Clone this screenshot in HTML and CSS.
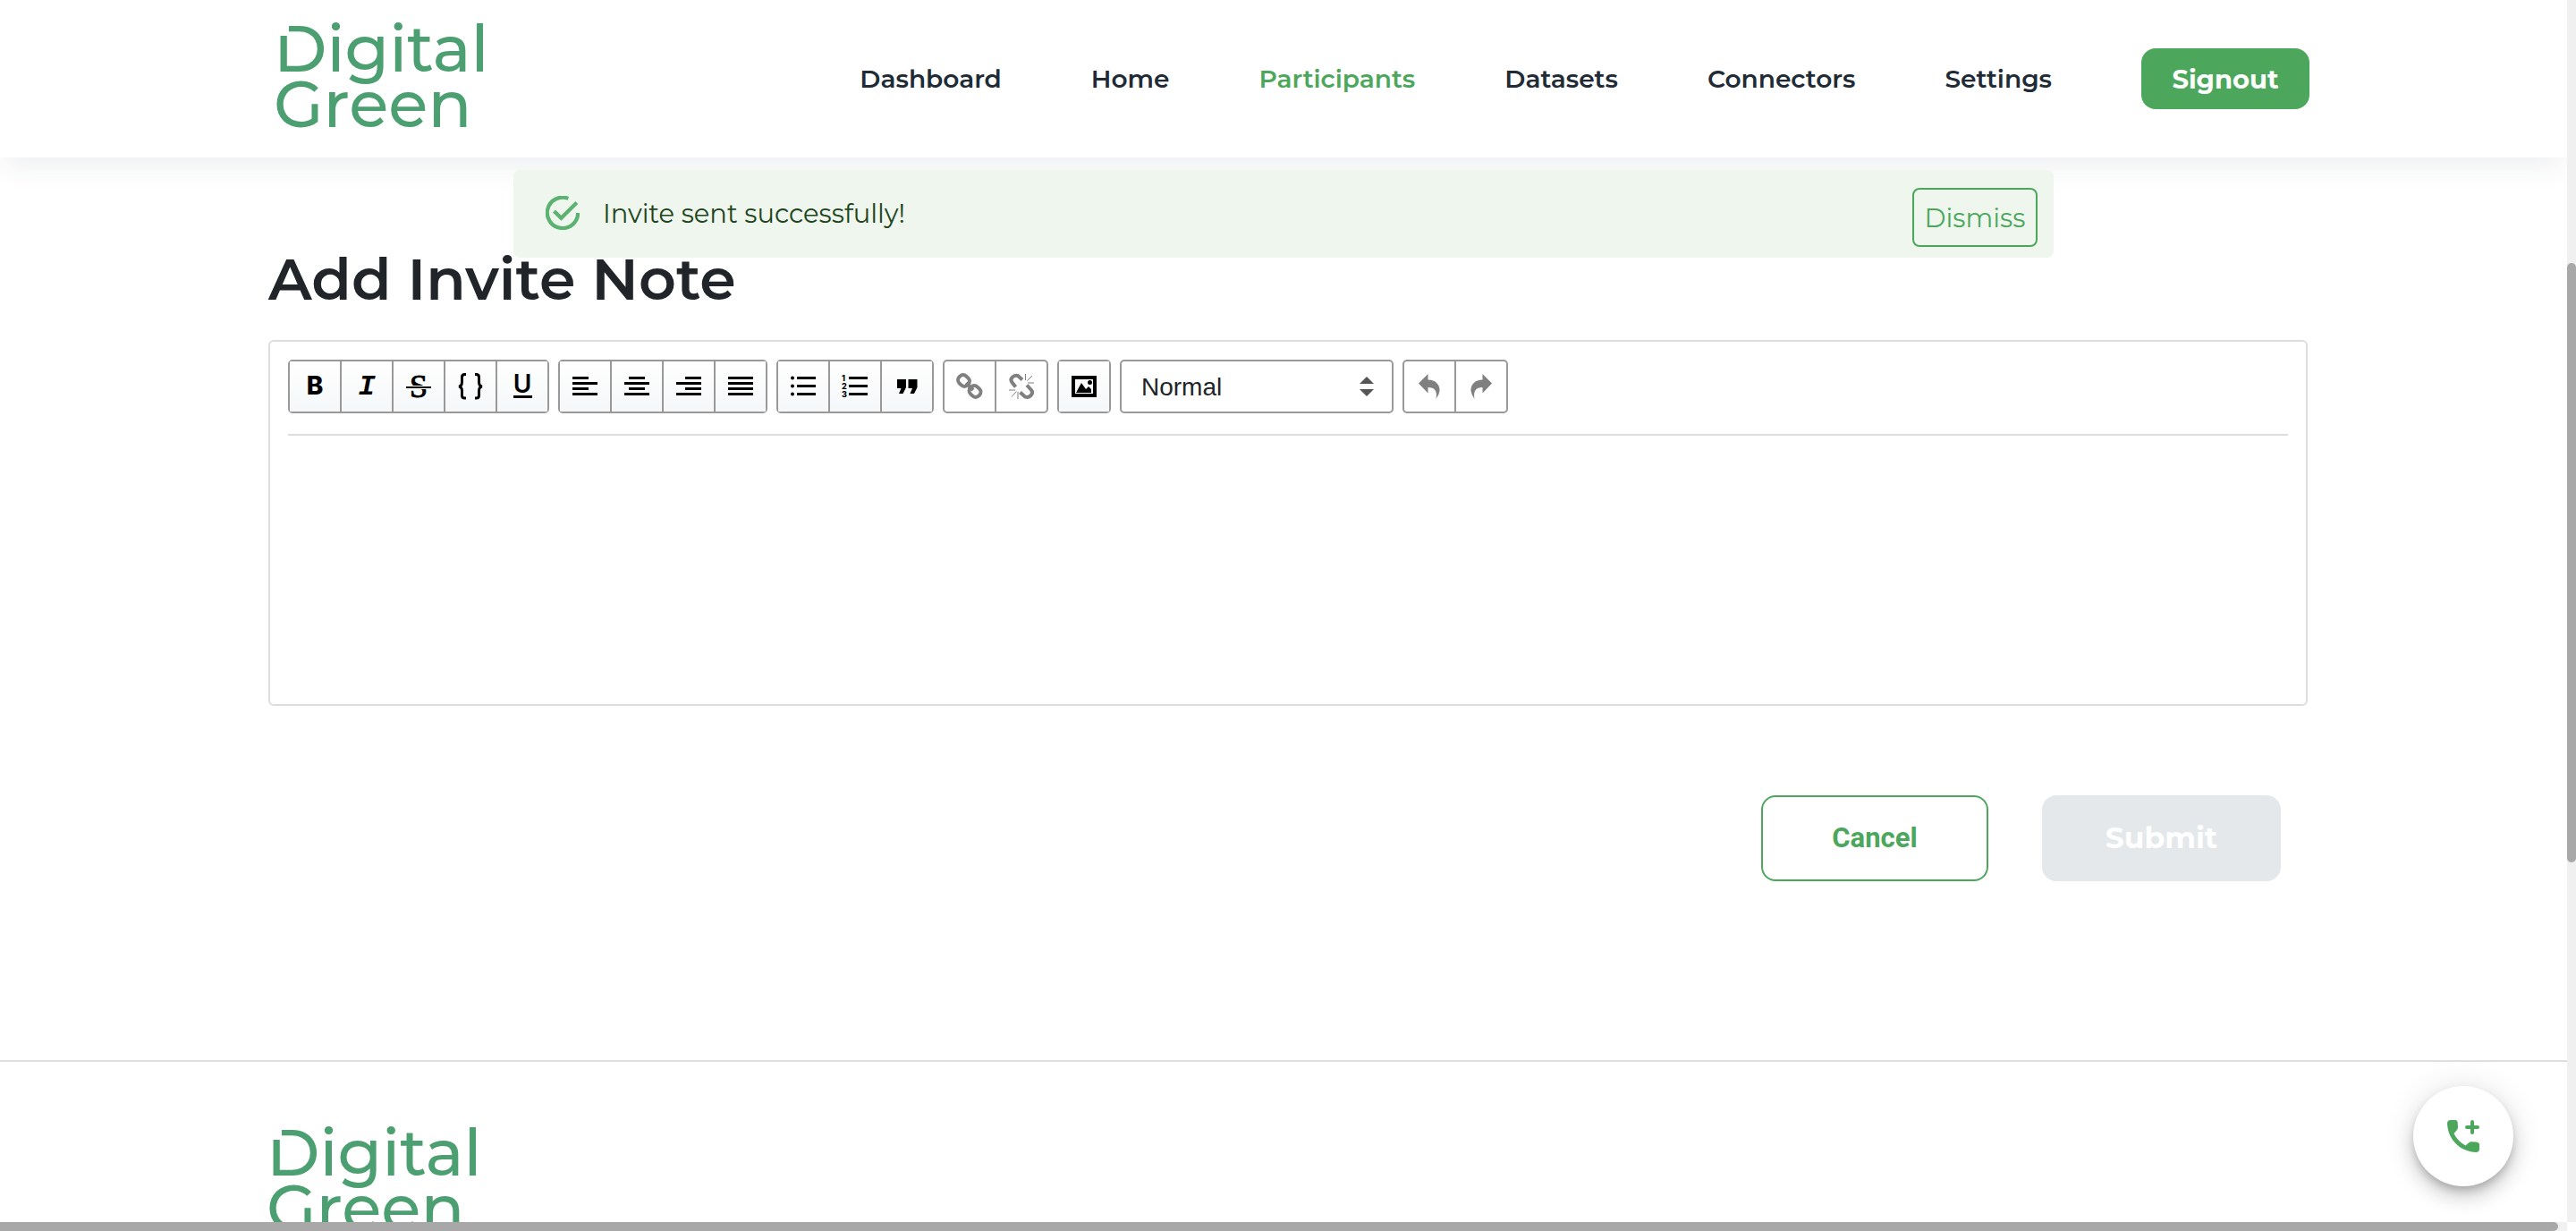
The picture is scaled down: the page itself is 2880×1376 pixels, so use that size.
FILE: index.html
```html
<!DOCTYPE html>
<html lang="en">
<head>
<meta charset="utf-8">
<meta name="viewport" content="width=device-width, initial-scale=1">
<title>Digital Green - Add Invite Note</title>
<link rel="stylesheet" href="styles.css">
</head>
<body>
<div class="window">
  <div class="page">
    <header class="header">
      <a href="#" class="logo-link" aria-label="Digital Green">
        <svg class="logo" viewBox="0 0 304 132" aria-hidden="true">
          <text x="0" y="49">Digital</text>
          <text x="0" y="111">Green</text>
          <rect class="logo-cut" x="5" y="-3" width="12" height="12"/>
        </svg>
      </a>
      <nav class="nav">
        <a href="#">Dashboard</a>
        <a href="#">Home</a>
        <a href="#" class="active">Participants</a>
        <a href="#">Datasets</a>
        <a href="#">Connectors</a>
        <a href="#">Settings</a>
        <button type="button" class="signout">Signout</button>
      </nav>
    </header>

    <div class="toast" role="status">
      <svg class="toast-icon" viewBox="0 0 36 36" fill="none" stroke="#5cb270" stroke-width="4" aria-hidden="true">
        <path d="M24 2.7A16.3 16.3 0 1 0 34.300 18"/>
        <path d="M9 16l7.500 7.500L33 7"/>
      </svg>
      <span class="toast-text">Invite sent successfully!</span>
      <button type="button" class="dismiss">Dismiss</button>
    </div>

    <main class="main">
      <h1>Add Invite Note</h1>
      <section class="editor">
        <div class="toolbar">
          <div class="group">
            <button type="button" aria-label="Bold"><svg viewBox="0 0 32 32"><text class="ic-b" x="16" y="25">B</text></svg></button>
            <button type="button" aria-label="Italic"><svg viewBox="0 0 32 32"><text class="ic-i" x="16" y="25">I</text></svg></button>
            <button type="button" aria-label="Strikethrough"><svg viewBox="0 0 32 32"><text class="ic-s" x="16" y="28">S</text><rect class="halo" x="2" y="15" width="28" height="4"/><rect x="2" y="16" width="28" height="2"/></svg></button>
            <button type="button" aria-label="Monospace"><svg viewBox="0 0 32 32" fill="none" stroke="#000" stroke-width="3"><path d="M11 2.500H9.500Q6.500 2.500 6.500 5.500V11Q6.500 15.500 3 16Q6.500 16.500 6.500 21V26Q6.500 29 9.500 29H11M21 2.500h1.500Q25.500 2.500 25.500 5.500V11Q25.500 15.500 29 16Q25.500 16.500 25.500 21V26Q25.500 29 22.500 29H21"/></svg></button>
            <button type="button" aria-label="Underline"><svg viewBox="0 0 32 32"><text class="ic-u" x="16" y="23">U</text><rect x="6" y="26" width="21" height="3"/></svg></button>
          </div>
          <div class="group">
            <button type="button" aria-label="Align left"><svg viewBox="0 0 32 32"><path d="M2 5h18v3H2zM2 11h28v3H2zM2 17h18v3H2zM2 23h28v3H2z"/></svg></button>
            <button type="button" aria-label="Align center"><svg viewBox="0 0 32 32"><path d="M7 5h18v3H7zM2 11h28v3H2zM7 17h18v3H7zM2 23h28v3H2z"/></svg></button>
            <button type="button" aria-label="Align right"><svg viewBox="0 0 32 32"><path d="M12 5h18v3H12zM2 11h28v3H2zM12 17h18v3H12zM2 23h28v3H2z"/></svg></button>
            <button type="button" aria-label="Justify"><svg viewBox="0 0 32 32"><path d="M2 5h28v3H2zM2 11h28v3H2zM2 17h28v3H2zM2 23h28v3H2z"/></svg></button>
          </div>
          <div class="group">
            <button type="button" aria-label="Bulleted list"><svg viewBox="0 0 32 32"><circle cx="4" cy="6.500" r="2"/><circle cx="4" cy="15.500" r="2"/><circle cx="4" cy="24.500" r="2"/><path d="M9 5h21v3H9zM9 14h21v3H9zM9 23h21v3H9z"/></svg></button>
            <button type="button" aria-label="Numbered list"><svg viewBox="0 0 32 32"><path d="M9 5h21v3H9zM9 14h21v3H9zM9 23h21v3H9z"/><g class="ic-n"><text x="1" y="10">1</text><text x="1" y="19">2</text><text x="1" y="28">3</text></g></svg></button>
            <button type="button" aria-label="Quote"><svg viewBox="0 0 32 32"><path d="M5 8h10v9l-3.500 7H7l2.500-6H5zM17.500 8h10v9L24 24h-4.500l2.500-6h-4.500z"/></svg></button>
          </div>
          <div class="group">
            <button type="button" aria-label="Link" disabled><svg viewBox="0 0 32 32" fill="none" stroke="#808080" stroke-width="4"><rect x="-5.500" y="-6.500" width="11" height="13" rx="5" transform="translate(9.500 9.500) rotate(-45)"/><rect x="-5.500" y="-6.500" width="11" height="13" rx="5" transform="translate(22 21.500) rotate(-45)"/><path d="M12 12l8 8"/></svg></button>
            <button type="button" aria-label="Unlink" disabled><svg viewBox="0 0 32 32" fill="none" stroke="#808080"><path stroke-width="4" d="M9.500 16.500l-4-5Q3 8 6 5.500T12 4l5 4.500M22 14.500l5 5.500Q29.500 23 26.500 26T20 27.500l-5.500-5"/><path stroke-width="1" d="M20.500 2v7M28 4l-5.500 5.500M30 12h-7M12 22v8M10.500 21.500L5 27.500M9 20H2"/></svg></button>
          </div>
          <div class="group">
            <button type="button" aria-label="Image"><svg viewBox="0 0 32 32"><path fill-rule="evenodd" d="M2 4h28v24H2zM6 8v16h20V8z"/><path d="M7 23l6-11 5 7 3-3 3 3v4z"/><circle cx="22.500" cy="11.500" r="2.500"/></svg></button>
          </div>
          <label class="block-type">
            <select aria-label="Block type"><option>Normal</option><option>Heading</option><option>Quote</option></select>
            <svg viewBox="0 0 16 22" aria-hidden="true"><path d="M0 8l8-8 8 8zM0 14h16l-8 8z"/></svg>
          </label>
          <div class="group">
            <button type="button" aria-label="Undo" disabled><svg viewBox="0 0 32 32"><path d="M4 12.500L14.500 2v6.500C23 8.500 28 14 27.500 21q-.5 4-4 9Q26 17 14.500 17v6.500z"/></svg></button>
            <button type="button" aria-label="Redo" disabled><svg viewBox="0 0 32 32"><path d="M28 12.500L17.500 2v6.500C9 8.500 4 14 4.500 21q.5 4 4 9Q6 17 17.500 17v6.500z"/></svg></button>
          </div>
        </div>
        <div class="editor-body" contenteditable="true" role="textbox" aria-multiline="true" aria-label="Invite note"></div>
      </section>
      <div class="actions">
        <button type="button" class="cancel">Cancel</button>
        <button type="submit" class="submit" disabled>Submit</button>
      </div>
    </main>

    <footer class="footer">
      <svg class="logo" viewBox="0 0 304 132" role="img" aria-label="Digital Green">
        <text x="0" y="49">Digital</text>
        <text x="0" y="111">Green</text>
        <rect class="logo-cut" x="5" y="-3" width="12" height="12"/>
      </svg>
    </footer>

    <button type="button" class="call" aria-label="Add call">
      <svg viewBox="0 0 36 36"><path d="M4 0h5q2.500 0 2.700 3l.3 5q0 2-1.500 3.500L7.500 15Q12 24 20.500 28.500l3.500-3Q25 24 27.500 24.200l5 .3Q36 25 36 27.500V32q0 4-4 4C14 35 1 22 0 4Q0 0 4 0z"/><path class="plus" d="M28 2v12M22 8h12"/></svg>
    </button>
  </div>
  <div class="scroll-y"><div class="thumb"></div></div>
  <div class="scroll-x"><div class="thumb"></div></div>
</div>
</body>
</html>
```
FILE: styles.css
```css
* { box-sizing: border-box; }

body {
  margin: 0;
  font-family: Montserrat, Inter, sans-serif;
  font-size: 28px;
  color: #212529;
  background: #fff;
}

button { font: inherit; cursor: pointer; padding: 0; }

/* Window frame: page area plus the two scrollbars */
.window {
  display: grid;
  grid-template: minmax(0, 1fr) 10px / minmax(0, 1fr) 10px;
  height: 100vh;
}
.page { position: relative; overflow: hidden; }
.scroll-x, .scroll-y { background: #f0f0f0; }
.thumb { background: #a8a8a8; border-radius: 5px; }
.scroll-y { padding-top: 294px; }
.scroll-y .thumb { height: 670px; }
.scroll-x .thumb { height: 10px; margin-right: 10px; border-radius: 0 5px 5px 0; }

/* Header */
.header {
  position: relative;
  z-index: 1;
  display: flex;
  align-items: center;
  justify-content: space-between;
  height: 176px;
  padding: 0 288px 0 306px;
  background: #fff;
  box-shadow: 0 16px 30px -6px rgba(38, 57, 77, 0.08);
}
.logo-link { display: block; height: 132px; margin-top: 18px; }
.logo { display: block; width: 304px; height: 132px; overflow: visible; fill: #4c9f70; font-size: 72px; font-weight: 500; }
.logo-cut { fill: #fff; }
.nav { display: flex; align-items: center; gap: 100px; font-weight: 600; }
.nav a { color: #212b36; text-decoration: none; }
.nav .active { color: #4ca75d; }
.signout {
  width: 188px;
  height: 68px;
  border: 0;
  border-radius: 16px;
  background: #4ca75d;
  color: #fff;
  font-size: 29px;
  font-weight: 700;
}

/* Success message */
.toast {
  position: absolute;
  z-index: 2;
  top: 190px;
  left: 20%;
  width: 60%;
  height: 98px;
  display: flex;
  align-items: center;
  padding: 0 18px 2px 36px;
  border-radius: 8px;
  background: #eff6ee;
  font-size: 29px;
}
.toast-icon { width: 38px; height: 38px; }
.toast-text { flex: 1; margin-left: 26px; color: #1e4620; }
.dismiss {
  width: 140px;
  height: 66px;
  margin-top: 10px;
  border: 2px solid #4ca75d;
  border-radius: 8px;
  background: none;
  color: #4ca75d;
}

/* Invite note form */
.main { padding: 97px 290px 200px 300px; }
h1 { margin: 0 0 29px; font-size: 65px; line-height: 78px; font-weight: 600; }
.editor { min-height: 409px; padding: 20px; border: 2px solid #ddd; border-radius: 6px; }
.toolbar { display: flex; gap: 10px; padding-bottom: 23px; border-bottom: 2px solid #ddd; }
.group { display: flex; border: 2px solid #999; border-radius: 5px; }
.group button {
  display: grid;
  place-items: center;
  width: 56px;
  height: 56px;
  border: 0;
  background: linear-gradient(#fff, #f5f7f8);
}
.group button + button { width: 58px; border-left: 2px solid #999; }
.group button:disabled { background: none; cursor: default; }
.group svg { width: 32px; height: 32px; overflow: visible; }
.group button:disabled svg:not([fill]) { fill: #808080; }
.group text { text-anchor: middle; }
.ic-b { font: 800 28px Inter, sans-serif; }
.ic-i { font: italic 700 32px "Liberation Mono", monospace; }
.ic-s { font: 36px "Liberation Serif", serif; stroke: #000; stroke-width: 1px; }
.ic-u { font: 600 28px Inter, sans-serif; }
.group .ic-n text { font: 800 9px Inter, sans-serif; text-anchor: start; }
.halo { fill: #fafbfb; }
.block-type { position: relative; width: 306px; }
.block-type select {
  appearance: none;
  width: 100%;
  height: 60px;
  padding: 0 50px 0 22px;
  border: 2px solid #999;
  border-radius: 5px;
  background: #fff;
  color: #212529;
  font: 28px "Liberation Sans", Arial, sans-serif;
}
.block-type svg { position: absolute; right: 22px; top: 19px; width: 16px; height: 22px; fill: #555; pointer-events: none; }
.editor-body { min-height: 240px; outline: 0; }

.actions { display: flex; justify-content: flex-end; gap: 60px; margin-top: 100px; padding-right: 30px; }
.actions button { height: 96px; padding-bottom: 2px; border-radius: 16px; font-weight: 700; }
.cancel { width: 254px; border: 2px solid #4ca75d; background: #fff; color: #4ca75d; font-family: Roboto, sans-serif; font-size: 31px; }
.submit { width: 267px; border: 0; background: #e4e8eb; color: #fff; font-size: 33px; }

/* Footer */
.footer { padding: 78px 298px; border-top: 2px solid #dedede; }

.call {
  position: absolute;
  z-index: 3;
  right: 60px;
  bottom: 40px;
  display: grid;
  place-items: center;
  width: 112px;
  height: 112px;
  border: 0;
  border-radius: 50%;
  background: #fff;
  box-shadow: 0 6px 10px -2px rgba(0, 0, 0, 0.2), 0 12px 20px rgba(0, 0, 0, 0.14), 0 2px 36px rgba(0, 0, 0, 0.12);
}
.call svg { width: 36px; height: 36px; fill: #4ca75d; }
.plus { stroke: #4ca75d; stroke-width: 4; stroke-linecap: round; }
```
